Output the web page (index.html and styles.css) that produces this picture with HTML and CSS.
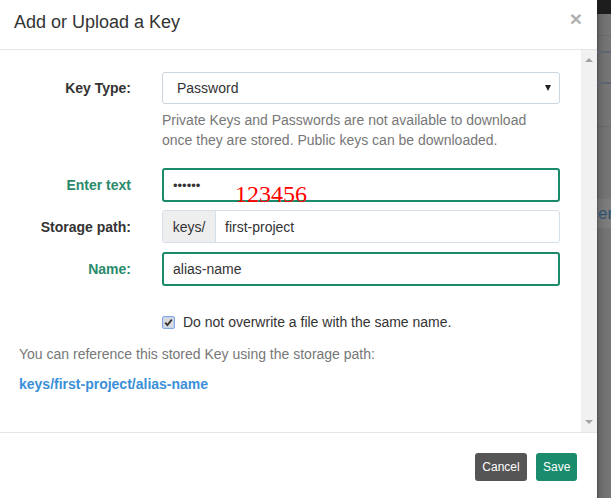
FILE: index.html
```html
<!DOCTYPE html>
<html>
<head>
<meta charset="utf-8">
<link rel="stylesheet" href="styles.css">
</head>
<body>
<div class="page">
  <div class="modal">
    <div class="modal-header">
      <h4 class="title">Add or Upload a Key</h4>
      <span class="close">×</span>
    </div>
    <div class="modal-body">
      <div class="body-content">
        <div class="row row-select">
          <label class="lbl">Key Type:</label>
          <div class="select"><span>Password</span><span class="caret"></span></div>
        </div>
        <div class="row row-help">
          <span></span>
          <p class="help">Private Keys and Passwords are not available to download once they are stored. Public keys can be downloaded.</p>
        </div>
        <div class="row row-enter">
          <label class="lbl lbl-ok">Enter text</label>
          <div class="field field-ok dots">••••••</div>
        </div>
        <div class="row row-path">
          <label class="lbl">Storage path:</label>
          <div class="group">
            <span class="addon">keys/</span>
            <span class="group-input">first-project</span>
          </div>
        </div>
        <div class="row row-name">
          <label class="lbl lbl-ok">Name:</label>
          <div class="field field-ok">alias-name</div>
        </div>
        <div class="row row-check">
          <span></span>
          <div class="check-line">
            <span class="checkbox"><svg width="9" height="9" viewBox="0 0 9 9"><path d="M1.2 4.6 L3.4 7 L7.8 1.6" fill="none" stroke="#333" stroke-width="1.8"/></svg></span>
            <span>Do not overwrite a file with the same name.</span>
          </div>
        </div>
        <p class="ref">You can reference this stored Key using the storage path:</p>
        <p class="path-link">keys/first-project/alias-name</p>
      </div>
      <div class="scrollbar"><span class="arrow up"></span><span class="arrow down"></span></div>
    </div>
    <div class="modal-footer">
      <button class="btn btn-cancel">Cancel</button>
      <button class="btn btn-save">Save</button>
    </div>
  </div>
  <div class="backdrop">
    <div class="bd-top"></div>
    <div class="bd-gap1"></div>
    <div class="bd-line bd-line-faint"></div>
    <div class="bd-gap2"></div>
    <div class="bd-line bd-line-blue"></div>
    <div class="bd-gap3"></div>
    <div class="bd-line bd-line-blue"></div>
    <div class="bd-gap4"></div>
    <div class="bd-line bd-line-faint"></div>
    <div class="bd-gap5"></div>
    <div class="bd-band">em</div>
  </div>
</div>
<div class="annotation">123456</div>
</body>
</html>
```
FILE: styles.css
```css
html, body {
  margin: 0;
  padding: 0;
}
body {
  font-family: "Liberation Sans", Arial, sans-serif;
  font-size: 14px;
  color: #333;
  width: 611px;
  height: 498px;
  overflow: hidden;
  position: relative;
}
.page {
  display: flex;
  height: 498px;
}
.modal {
  width: 597px;
  background: #fff;
  display: flex;
  flex-direction: column;
}
.modal-header {
  box-sizing: border-box;
  border-bottom: 1px solid #e5e5e5;
  padding: 12px 15px 0 14px;
  display: flex;
  justify-content: space-between;
  align-items: flex-start;
  height: 50px;
}
.title {
  margin: 0;
  font-size: 18px;
  line-height: 20px;
  font-weight: normal;
  color: #333;
}
.close {
  font-size: 21px;
  line-height: 21px;
  font-weight: bold;
  color: #b0b0b0;
  margin-top: -4px;
}
.modal-body {
  height: 382px;
  display: flex;
  border-bottom: 1px solid #e5e5e5;
}
.body-content {
  flex: 1;
  padding: 22px 20px 0 19px;
}
.scrollbar {
  width: 16px;
  background: #f1f1f1;
  display: flex;
  flex-direction: column;
  justify-content: space-between;
  align-items: center;
  padding: 8px 0 8px;
  box-sizing: border-box;
}
.arrow {
  width: 0;
  height: 0;
  border-left: 4px solid transparent;
  border-right: 4px solid transparent;
}
.arrow.up { border-bottom: 4px solid #a3a3a3; }
.arrow.down { border-top: 4px solid #a3a3a3; }

.row {
  display: grid;
  grid-template-columns: 112px 398px;
  column-gap: 31px;
  align-items: center;
}
.lbl {
  text-align: right;
  font-weight: bold;
  color: #333;
}
.lbl-ok { color: #2a8a6c; }
.select {
  height: 32px;
  box-sizing: border-box;
  border: 1px solid #cbd6e1;
  border-radius: 3px;
  padding: 0 8px 0 14px;
  display: flex;
  align-items: center;
  justify-content: space-between;
}
.caret {
  width: 0;
  height: 0;
  border-left: 3px solid transparent;
  border-right: 3px solid transparent;
  border-top: 6px solid #222;
}
.row-help { margin-top: 6px; }
.help {
  margin: 0;
  line-height: 20px;
  color: #777;
  max-width: 385px;
}
.row-enter { margin-top: 18px; }
.field {
  height: 34px;
  box-sizing: border-box;
  border: 1px solid #ccd5df;
  border-radius: 3px;
  padding: 0 10px;
  display: flex;
  align-items: center;
}
.field-ok {
  border: 2px solid #1b8a6b;
  padding: 0 9px;
}
.dots {
  font-size: 13px;
}
.row-path { margin-top: 8px; }
.group {
  height: 33px;
  box-sizing: border-box;
  border: 1px solid #d5dfe9;
  border-radius: 3px;
  display: flex;
}
.addon {
  width: 52px;
  background: #eee;
  border-right: 1px solid #d5dfe9;
  display: flex;
  align-items: center;
  justify-content: center;
  border-radius: 3px 0 0 3px;
}
.group-input {
  padding-left: 9px;
  display: flex;
  align-items: center;
}
.row-name { margin-top: 9px; }
.row-check {
  margin-top: 26px;
  line-height: 20px;
}
.check-line {
  display: flex;
  align-items: center;
  gap: 8px;
}
.checkbox {
  width: 13px;
  height: 13px;
  box-sizing: border-box;
  border: 1px solid #86a8e0;
  border-radius: 2px;
  background: #dadada;
  box-shadow: inset 0 0 0 1px #c2d4f3;
  display: flex;
  align-items: center;
  justify-content: center;
}
.ref {
  margin: 12px 0 0;
  line-height: 20px;
  color: #777;
}
.path-link {
  margin: 10px 0 0;
  line-height: 20px;
  color: #3a8fd8;
  font-weight: bold;
}
.modal-footer {
  flex: 1;
  display: flex;
  justify-content: flex-end;
  align-items: flex-start;
  gap: 9px;
  padding: 20px 20px 0 0;
}
.btn {
  font-family: "Liberation Sans", Arial, sans-serif;
  font-size: 12px;
  line-height: 18px;
  height: 28px;
  padding: 5px 7px;
  border: none;
  border-radius: 3px;
  color: #fff;
  box-sizing: border-box;
}
.btn-cancel {
  background: #555;
  width: 52px;
}
.btn-save {
  background: #1a8b6c;
  width: 41px;
}
.backdrop {
  flex: 1;
  display: flex;
  flex-direction: column;
  background: linear-gradient(to right, #4e4e4e, #666 2px, #727272 8px, #777);
  overflow: hidden;
}
.bd-top { height: 14px; background: #1d1d1d; }
.bd-gap1 { height: 21px; }
.bd-line { height: 1px; }
.bd-line-faint { background: rgba(0,0,0,0.08); }
.bd-line-blue { height: 2px; background: #5d6670; }
.bd-gap2 { height: 15px; }
.bd-gap3 { height: 29px; }
.bd-gap4 { height: 42px; }
.bd-gap5 { height: 72px; }
.bd-band {
  height: 29px;
  background: rgba(255,255,255,0.06);
  color: #2f5272;
  font-size: 17px;
  line-height: 29px;
  white-space: nowrap;
  padding-left: 1px;
}
.annotation {
  position: absolute;
  left: 235px;
  top: 182px;
  font-family: "Liberation Serif", "Times New Roman", serif;
  font-size: 24px;
  line-height: 24px;
  color: #ff0000;
}
```
